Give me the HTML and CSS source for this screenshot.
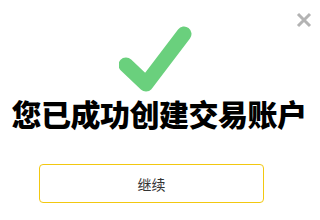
FILE: index.html
```html
<!DOCTYPE html>
<html lang="zh">
<head>
<meta charset="utf-8">
<link rel="stylesheet" href="styles.css">
</head>
<body>
<div class="dialog">
  <button class="close" aria-label="关闭">
    <svg width="16" height="16" viewBox="0 0 16 16"><path d="M2 2L14 14M14 2L2 14" stroke="#b3b3b3" stroke-width="3" stroke-linecap="butt"/></svg>
  </button>
  <svg class="check" width="80" height="72" viewBox="0 0 80 72"><path d="M7 43L27 62L65 12" fill="none" stroke="#6ad07d" stroke-width="15" stroke-linecap="round" stroke-linejoin="round"/></svg>
  <h1 class="title">您已成功创建交易账户</h1>
  <button class="continue">继续</button>
</div>
</body>
</html>
```
FILE: styles.css
```css
html, body {
  margin: 0;
  padding: 0;
  background: #fff;
}
.dialog {
  position: relative;
  width: 320px;
  height: 220px;
  display: flex;
  flex-direction: column;
  align-items: center;
  font-family: "Noto Sans CJK SC", "Noto Sans", sans-serif;
}
.close {
  position: absolute;
  top: 12px;
  left: 296px;
  padding: 0;
  border: 0;
  background: none;
  width: 16px;
  height: 16px;
}
.close svg { display: block; }
.check {
  display: block;
  margin-top: 22px;
  margin-left: -3px;
}
.title {
  margin: 0 0 0 -2px;
  font-size: 30px;
  font-weight: 900;
  line-height: 38px;
  color: #000;
  letter-spacing: -0.5px;
}
.continue {
  align-self: flex-start;
  margin-top: 32px;
  margin-left: 39px;
  width: 225px;
  height: 39px;
  border: 1px solid #f2c811;
  border-radius: 4px;
  background: #fff;
  font-family: "Noto Sans CJK SC", sans-serif;
  font-size: 14px;
  color: #333;
  padding: 0;
}
```
